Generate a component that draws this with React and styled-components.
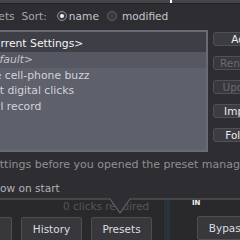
import React from "react";
import styled, { createGlobalStyle } from "styled-components";

const GlobalStyle = createGlobalStyle`
  body {
    margin: 0;
    background: #2e2e32;
  }
`;

const Screen = styled.div`
  width: 240px;
  height: 240px;
  overflow: hidden;
  background: #2e2e32;
  font-family: "DejaVu Sans", "Liberation Sans", sans-serif;
  display: flex;
  flex-direction: column;
`;

const TopStrip = styled.div`
  height: 3px;
  flex: none;
  display: flex;
  background: #44444a;
  border-bottom: 1px solid #232326;
`;

const Tick = styled.span`
  margin-left: 170px;
  width: 2px;
  height: 3px;
  background: #fff;
`;

/* the manager panel runs off the left edge of the shot */
const Manager = styled.div`
  margin-left: -25px;
  width: 300px;
  flex: none;
  display: flex;
  flex-direction: column;
`;

const Header = styled.div`
  height: 23px;
  margin-bottom: 3px;
  padding-left: 1px;
  display: flex;
  align-items: center;
  font-size: 10.6px;
  white-space: nowrap;
`;

const Label = styled.span`
  margin-right: ${(p) => p.$gap || 0}px;
  color: ${(p) => (p.$bright ? "#c6c6cb" : "#a6a6ab")};
`;

const Radio = styled.span`
  width: 10px;
  height: 10px;
  flex: none;
  box-sizing: border-box;
  border-radius: 50%;
  border: 1px solid ${(p) => (p.$on ? "#8e8e94" : "#626268")};
  background: #3a3a3f;
  display: flex;
  align-items: center;
  justify-content: center;
  margin-right: ${(p) => p.$gap || 0}px;

  &::after {
    content: "";
    width: 4px;
    height: 4px;
    border-radius: 50%;
    background: ${(p) => (p.$on ? "#f2f2f2" : "transparent")};
  }
`;

const Body = styled.div`
  display: flex;
  align-items: flex-start;
`;

const ListPanel = styled.div`
  width: 233px;
  height: 122px;
  flex: none;
  box-sizing: border-box;
  border: 2px solid #686a74;
  border-left: none;
  background: #5e606b;
  font-size: 10.8px;
  white-space: nowrap;
  overflow: hidden;
`;

const ListItem = styled.div`
  box-sizing: border-box;
  height: ${(p) => (p.$selected ? 20 : 15.5)}px;
  padding: ${(p) => (p.$selected ? "3px 0 0 2px" : "0 0 0 2px")};
  line-height: ${(p) => (p.$selected ? 17 : 15.5)}px;
  background: ${(p) =>
    p.$selected ? "#3d3e46" : p.$placeholder ? "#555762" : "transparent"};
  color: ${(p) =>
    p.$selected ? "#f4f4f4" : p.$placeholder ? "#c4c5cc" : "#d2d3d9"};
  font-style: ${(p) => (p.$placeholder ? "italic" : "normal")};
`;

const ButtonColumn = styled.div`
  margin-left: 5px;
  padding-top: 2px;
  display: flex;
  flex-direction: column;
  gap: 10px;
`;

const SideButton = styled.div`
  width: 57px;
  height: 14px;
  box-sizing: border-box;
  border: 1px solid #505057;
  border-radius: 3px;
  background: ${(p) => (p.$disabled ? "#38383d" : "#3c3c41")};
  color: ${(p) => (p.$disabled ? "#6b6b71" : "#ececef")};
  font-size: 10.5px;
  line-height: 12px;
  text-align: center;
  white-space: nowrap;
`;

const InfoText = styled.div`
  margin-top: 6px;
  height: 14px;
  line-height: 14px;
  padding-left: 8px;
  font-size: 11px;
  color: #8f8f95;
  white-space: nowrap;
`;

const ShowRow = styled.div`
  margin-top: 9px;
  height: 14px;
  display: flex;
  align-items: center;
  font-size: 10.6px;
  color: #b2b2b7;
  white-space: nowrap;
`;

const CheckBox = styled.span`
  width: 9px;
  height: 9px;
  box-sizing: border-box;
  border: 1px solid #77777d;
  background: #3a3a3f;
  margin-right: 2.5px;
`;

const Bottom = styled.div`
  position: relative;
  flex: 1;
  display: flex;
  padding-top: 5px;
  background: #29292c;
`;

const Outline = styled.svg`
  position: absolute;
  top: 0;
  left: 0;
  z-index: 2;
  pointer-events: none;
`;

const LeftCol = styled.div`
  width: 152px;
  flex: none;
  display: flex;
  flex-direction: column;
`;

const ClickNote = styled.div`
  height: 12px;
  line-height: 12px;
  padding-left: 63px;
  font-size: 10.5px;
  color: #55555b;
  white-space: nowrap;
`;

const ButtonRow = styled.div`
  margin-top: 5px;
  margin-left: -49px;
  display: flex;
  gap: 9px;
`;

const FooterButton = styled.div`
  width: 61px;
  height: 24px;
  flex: none;
  box-sizing: border-box;
  border: 1px solid #4d4d52;
  border-radius: 2px;
  background: #38383c;
  color: #dddde0;
  font-size: 10.5px;
  line-height: 22px;
  text-align: center;
  margin: ${(p) => p.$margin || 0};
`;

const Meter = styled.div`
  margin-left: 11px;
  width: 7px;
  height: 40px;
  flex: none;
  box-sizing: border-box;
  border-left: 1px solid #202429;
  background: #29313a;
`;

const RightCol = styled.div`
  margin-left: 22px;
  flex: none;
  display: flex;
  flex-direction: column;
`;

const InLabel = styled.div`
  height: 12px;
  margin-top: -1px;
  font-size: 7px;
  font-weight: bold;
  line-height: 9px;
  color: #f4f4f4;
`;

const presets = [
  { name: "<Current Settings>", selected: true },
  { name: "<default>", placeholder: true },
  { name: "Fake cell-phone buzz" },
  { name: "Light digital clicks" },
  { name: "Vinyl record" },
];

const sideButtons = [
  { label: "Add" },
  { label: "Rename", disabled: true },
  { label: "Update", disabled: true },
  { label: "Import" },
  { label: "Folder" },
];

export default function App() {
  return (
    <Screen>
      <GlobalStyle />
      <TopStrip>
        <Tick />
      </TopStrip>

      <Manager>
        <Header>
          <Label $gap={7}>Presets</Label>
          <Label $gap={10}>Sort:</Label>
          <Radio $on $gap={2} />
          <Label $bright $gap={8}>name</Label>
          <Radio $gap={5} />
          <Label $bright>modified</Label>
        </Header>

        <Body>
          <ListPanel>
            {presets.map((p) => (
              <ListItem key={p.name} $selected={p.selected} $placeholder={p.placeholder}>
                {p.name}
              </ListItem>
            ))}
          </ListPanel>
          <ButtonColumn>
            {sideButtons.map((b) => (
              <SideButton key={b.label} $disabled={b.disabled}>
                {b.label}
              </SideButton>
            ))}
          </ButtonColumn>
        </Body>

        <InfoText>(settings before you opened the preset manager)</InfoText>
        <ShowRow>
          <CheckBox />
          Show on start
        </ShowRow>
      </Manager>

      <Bottom>
        <Outline width="240" height="20" viewBox="0 0 240 20">
          <polygon points="0,0 240,0 240,4 130,4 120,18 110,4 0,4" fill="#2e2e32" />
          <polyline
            points="0,4 110,4 120,18 130,4 240,4"
            fill="none"
            stroke="#616167"
            strokeWidth="1.2"
          />
        </Outline>
        <LeftCol>
          <ClickNote>0 clicks required</ClickNote>
          <ButtonRow>
            <FooterButton>Undo</FooterButton>
            <FooterButton>History</FooterButton>
            <FooterButton>Presets</FooterButton>
          </ButtonRow>
        </LeftCol>
        <Meter />
        <RightCol>
          <InLabel>IN</InLabel>
          <FooterButton $margin="5px 0 0 5px">Bypass</FooterButton>
        </RightCol>
      </Bottom>
    </Screen>
  );
}
